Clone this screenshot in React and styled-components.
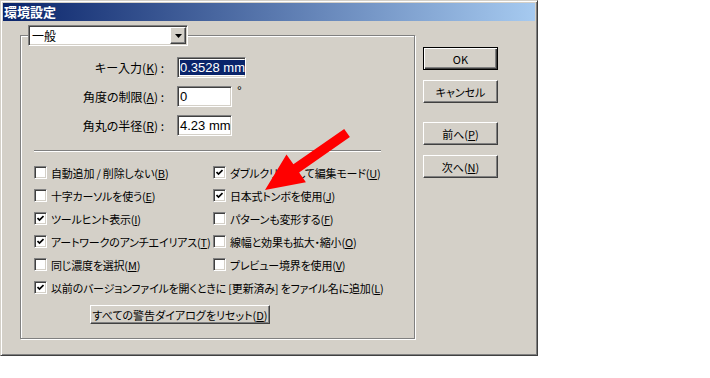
import React from "react";
import styled, { createGlobalStyle, css } from "styled-components";

const GlobalStyle = createGlobalStyle`
  html, body {
    margin: 0;
    padding: 0;
    background: #fff;
  }
  body {
    font-family: "Noto Sans CJK JP", "Liberation Sans", sans-serif;
    font-size: 11px;
    line-height: 14px;
    color: #000;
    font-feature-settings: "palt";
  }
`;

const sunken = css`
  border: 1px solid;
  border-color: #808080 #fff #fff #808080;
  box-shadow: inset 1px 1px #404040, inset -1px -1px #d4d0c8;
`;

const raised = css`
  border: 1px solid;
  border-color: #fff #404040 #404040 #fff;
  box-shadow: inset -1px -1px #808080;
`;

const Window = styled.div`
  position: relative;
  width: 538px;
  height: 356px;
  box-sizing: border-box;
  background: #d4d0c8;
  border: 1px solid;
  border-color: #d4d0c8 #404040 #404040 #d4d0c8;
  box-shadow: inset 1px 1px #fff, inset -1px -1px #808080;
  padding: 2px;
  display: flex;
  flex-direction: column;
`;

const TitleBar = styled.div`
  height: 18px;
  background: linear-gradient(90deg, #0a246a, #a6caf0);
  color: #fff;
  font-weight: bold;
  font-size: 13px;
  line-height: 18px;
  padding-left: 1px;
  font-feature-settings: normal;
`;

const Body = styled.div`
  display: flex;
  align-items: flex-start;
  gap: 8px;
  padding: 4px 0 0 17px;
`;

const Group = styled.fieldset`
  width: 395px;
  box-sizing: border-box;
  margin: 0;
  padding: 0 0 14px 0;
  min-inline-size: 0;
  border: 1px solid #808080;
  box-shadow: inset 1px 1px #fff, 1px 1px #fff;
`;

const Legend = styled.legend`
  padding: 0;
  margin-left: 7px;
`;

const Select = styled.div`
  ${sunken};
  width: 160px;
  height: 21px;
  box-sizing: border-box;
  background: #fff;
  display: flex;
  align-items: center;
  justify-content: space-between;
  padding: 1px 1px 1px 3px;
  font-size: 12px;
`;

const SelectArrow = styled.div`
  ${raised};
  box-shadow: inset -1px -1px #808080, inset 1px 1px #d4d0c8;
  width: 16px;
  height: 17px;
  box-sizing: border-box;
  background: #d4d0c8;
  display: flex;
  align-items: center;
  justify-content: center;
`;

const FormGrid = styled.div`
  display: grid;
  grid-template-columns: 143px auto;
  column-gap: 13px;
  row-gap: 8px;
  align-items: center;
  padding-top: 11px;
`;

const Label = styled.div`
  text-align: right;
  white-space: nowrap;
  font-size: 12px;
`;

const FieldRow = styled.div`
  display: flex;
  align-items: flex-start;
  gap: 5px;
`;

const Input = styled.div`
  ${sunken};
  width: ${(p) => p.$w}px;
  height: 21px;
  box-sizing: border-box;
  background: #fff;
  padding: 2px 2px;
  overflow: hidden;
  white-space: nowrap;
  font-family: "Liberation Sans", sans-serif;
  font-size: 13px;
  line-height: 15px;
`;

const Selected = styled.span`
  background: #0a246a;
  color: #fff;
`;

const Degree = styled.span`
  font-family: "Liberation Sans", sans-serif;
  font-size: 12px;
  line-height: 10px;
`;

const Separator = styled.div`
  margin: 14px 33px 0 13px;
  height: 0;
  border-top: 1px solid #808080;
  border-bottom: 1px solid #fff;
`;

const CheckGrid = styled.div`
  display: grid;
  grid-template-columns: 179px 1fr;
  grid-auto-rows: 23px;
  padding: 9px 0 0 13px;
`;

const CheckItem = styled.div`
  display: flex;
  align-items: center;
  gap: 4px;
  white-space: nowrap;
  letter-spacing: -0.2px;
  grid-column: ${(p) => (p.$wide ? "1 / span 2" : "auto")};
`;

const Box = styled.div`
  ${sunken};
  width: 13px;
  height: 13px;
  box-sizing: border-box;
  background: #fff;
  display: flex;
  align-items: center;
  justify-content: center;
  flex: none;
`;

const PushButton = styled.div`
  ${raised};
  ${(p) =>
    p.$default &&
    css`
      border: 1px solid #000;
      box-shadow: inset 1px 1px #fff, inset -1px -1px #404040,
        inset -2px -2px #808080;
    `}
  box-sizing: border-box;
  width: ${(p) => p.$w || 75}px;
  height: ${(p) => p.$h || 23}px;
  display: flex;
  align-items: center;
  justify-content: center;
  white-space: nowrap;
  margin-top: ${(p) => p.$mt || 0}px;
  margin-left: ${(p) => p.$ml || 0}px;
`;

const ButtonColumn = styled.div`
  display: flex;
  flex-direction: column;
  padding-top: 22px;
`;

const Overlay = styled.svg`
  position: absolute;
  top: -1px;
  left: -1px;
  pointer-events: none;
`;

const Check = ({ on }) => (
  <Box>
    {on && (
      <svg width="7" height="7" viewBox="0 0 7 7">
        <path d="M0.5 3 L2.5 5 L6.5 1" fill="none" stroke="#000" strokeWidth="1.7" />
      </svg>
    )}
  </Box>
);

const options = [
  [false, <>自動追加 / 削除しない(<u>B</u>)</>],
  [true, <>ダブルクリックして編集モード(<u>U</u>)</>],
  [false, <>十字カーソルを使う(<u>E</u>)</>],
  [true, <>日本式トンボを使用(<u>J</u>)</>],
  [true, <>ツールヒント表示(<u>I</u>)</>],
  [false, <>パターンも変形する(<u>F</u>)</>],
  [true, <>アートワークのアンチエイリアス(<u>T</u>)</>],
  [false, <>線幅と効果も拡大・縮小(<u>O</u>)</>],
  [false, <>同じ濃度を選択(<u>M</u>)</>],
  [false, <>プレビュー境界を使用(<u>V</u>)</>],
];

export default function App() {
  return (
    <>
      <GlobalStyle />
      <Window>
        <TitleBar>環境設定</TitleBar>
        <Body>
          <Group>
            <Legend>
              <Select>
                <span>一般</span>
                <SelectArrow>
                  <svg width="7" height="4" viewBox="0 0 7 4">
                    <path d="M0 0 H7 L3.5 4 Z" fill="#000" />
                  </svg>
                </SelectArrow>
              </Select>
            </Legend>
            <FormGrid>
              <Label>キー入力(<u>K</u>) :</Label>
              <FieldRow>
                <Input $w={69}>
                  <Selected>0.3528 mm</Selected>
                </Input>
              </FieldRow>
              <Label>角度の制限(<u>A</u>) :</Label>
              <FieldRow>
                <Input $w={55}>0</Input>
                <Degree>°</Degree>
              </FieldRow>
              <Label>角丸の半径(<u>R</u>) :</Label>
              <FieldRow>
                <Input $w={55}>4.23 mm</Input>
              </FieldRow>
            </FormGrid>
            <Separator />
            <CheckGrid>
              {options.map(([on, text], i) => (
                <CheckItem key={i}>
                  <Check on={on} />
                  <span>{text}</span>
                </CheckItem>
              ))}
              <CheckItem $wide>
                <Check on />
                <span>
                  以前のバージョンファイルを開くときに [更新済み] をファイル名に追加(<u>L</u>)
                </span>
              </CheckItem>
            </CheckGrid>
            <PushButton $w={180} $h={19} $ml={69} $mt={6}>
              すべての警告ダイアログをリセット(<u>D</u>)
            </PushButton>
          </Group>
          <ButtonColumn>
            <PushButton $default>OK</PushButton>
            <PushButton $mt={10}>キャンセル</PushButton>
            <PushButton $mt={19}>
              前へ(<u>P</u>)
            </PushButton>
            <PushButton $mt={10}>
              次へ(<u>N</u>)
            </PushButton>
          </ButtonColumn>
        </Body>
        <Overlay width="538" height="356" viewBox="0 0 538 356">
          <polygon
            points="349.9,137.1 344.2,128.9 293.4,164.2 286.5,154.4 265,190 305.9,182.2 299.1,172.4"
            fill="#ff0000"
          />
        </Overlay>
      </Window>
    </>
  );
}
